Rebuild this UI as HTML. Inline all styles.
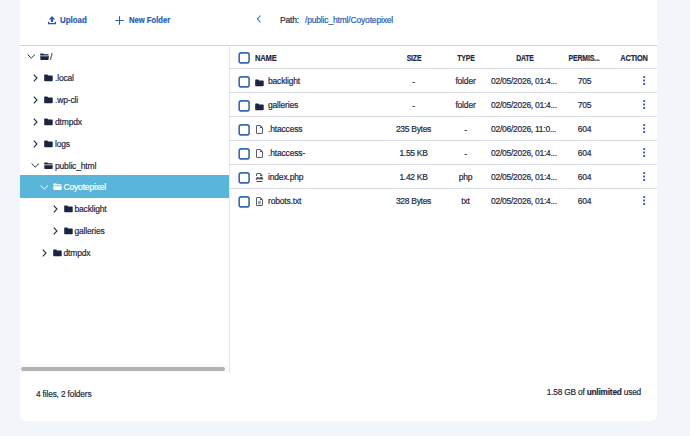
<!DOCTYPE html>
<html><head><meta charset="utf-8">
<style>
*{margin:0;padding:0;box-sizing:border-box}
html,body{width:690px;height:436px;overflow:hidden;background:#f2f5f9;font-family:"Liberation Sans",sans-serif;color:#1f2a44}
.card{position:absolute;left:20px;top:-10px;width:637px;height:431px;background:#fff;border-radius:6px}
.a{position:absolute;white-space:nowrap;line-height:10px;font-size:8.5px;letter-spacing:-0.17px;-webkit-text-stroke:0.2px currentColor}
.b{font-weight:bold}
.hd{font-size:8.6px;transform:scaleX(0.88);transform-origin:0 50%}
.hdc{font-size:8.6px;transform:scaleX(0.80);transform-origin:50% 50%}
.st{-webkit-text-stroke:0.2px currentColor}
.blue{color:#2a5db0}
.hl{position:absolute;height:1px;background:#d9dde1}
.vl{position:absolute;width:1px;background:#e6e6e7}
.cb{position:absolute;width:11.5px;height:11.5px;border:1.7px solid #3f67b0;border-radius:2.5px}
svg{position:absolute;overflow:visible}
</style></head><body>
<div class="card"></div>

<!-- toolbar -->
<svg style="left:47px;top:15px" width="10" height="10" viewBox="0 0 10 10"><path d="M5 1 L8.2 4.4 H6.1 V7 H3.9 V4.4 H1.8 Z" fill="#2456b8"/><path d="M1.6 6.8 V8.6 H8.4 V6.8" fill="none" stroke="#2456b8" stroke-width="1.3"/></svg>
<span class="a b blue" style="left:60px;top:15px;font-size:8.6px;letter-spacing:0;transform:scaleX(0.92);transform-origin:0 50%">Upload</span>
<svg style="left:115px;top:15.5px" width="9" height="9" viewBox="0 0 9 9"><path d="M4.5 0.3 V8.7 M0.3 4.5 H8.7" stroke="#2a5bb5" stroke-width="1.1"/></svg>
<span class="a b blue" style="left:128.5px;top:15px;font-size:8.6px;letter-spacing:0;transform:scaleX(0.89);transform-origin:0 50%">New Folder</span>
<svg style="left:255px;top:14px" width="8" height="10" viewBox="0 0 8 10"><path d="M5.5 1.5 L2.5 5 L5.5 8.5" fill="none" stroke="#3a68b8" stroke-width="1.1"/></svg>
<span class="a" style="left:280px;top:15px">Path:</span>
<span class="a blue" style="left:305px;top:15px">/public_html/Coyotepixel</span>

<div class="hl" style="left:20px;top:45px;width:637px;background:#d1d2d4"></div>
<div class="vl" style="left:229px;top:45px;height:328px"></div>

<!-- tree -->
<div style="position:absolute;left:20px;top:175px;width:209px;height:23px;background:#5ab5db"></div>
<svg style="left:27px;top:54.0px" width="9" height="5" viewBox="0 0 9 5"><path d="M0.6 0.5 L4.3 4.1 L8 0.5" fill="none" stroke="#1f2a44" stroke-width="1"/></svg>
<svg style="left:40px;top:52.5px" width="9" height="8" viewBox="0 0 9 8"><path d="M0.7 0.4 H3.2 L4.1 1.2 H8 Q8.6 1.2 8.6 1.8 V2.6 H0.2 V0.9 Q0.2 0.4 0.7 0.4 Z" fill="#1b2440"/><path d="M0.1 3.2 H8.9 L8.5 6.6 Q8.45 7.1 7.9 7.1 H1.1 Q0.55 7.1 0.5 6.6 Z" fill="#1b2440"/></svg>
<span class="a " style="left:50px;top:51.5px;">/</span>
<svg style="left:33px;top:74.3px" width="5" height="8" viewBox="0 0 5 8"><path d="M0.8 0.6 L4 4 L0.8 7.4" fill="none" stroke="#1f2a44" stroke-width="1.1"/></svg>
<svg style="left:44px;top:74.3px" width="9" height="8" viewBox="0 0 9 8"><path d="M0.8 0.4 H3.2 L4.2 1.4 H8 Q8.7 1.4 8.7 2.1 V6.6 Q8.7 7.3 8 7.3 H0.9 Q0.2 7.3 0.2 6.6 V1 Q0.2 0.4 0.8 0.4 Z" fill="#1b2440"/></svg>
<span class="a " style="left:55px;top:73.3px;">.local</span>
<svg style="left:33px;top:96.1px" width="5" height="8" viewBox="0 0 5 8"><path d="M0.8 0.6 L4 4 L0.8 7.4" fill="none" stroke="#1f2a44" stroke-width="1.1"/></svg>
<svg style="left:44px;top:96.1px" width="9" height="8" viewBox="0 0 9 8"><path d="M0.8 0.4 H3.2 L4.2 1.4 H8 Q8.7 1.4 8.7 2.1 V6.6 Q8.7 7.3 8 7.3 H0.9 Q0.2 7.3 0.2 6.6 V1 Q0.2 0.4 0.8 0.4 Z" fill="#1b2440"/></svg>
<span class="a " style="left:55px;top:95.1px;">.wp-cli</span>
<svg style="left:33px;top:117.9px" width="5" height="8" viewBox="0 0 5 8"><path d="M0.8 0.6 L4 4 L0.8 7.4" fill="none" stroke="#1f2a44" stroke-width="1.1"/></svg>
<svg style="left:44px;top:117.9px" width="9" height="8" viewBox="0 0 9 8"><path d="M0.8 0.4 H3.2 L4.2 1.4 H8 Q8.7 1.4 8.7 2.1 V6.6 Q8.7 7.3 8 7.3 H0.9 Q0.2 7.3 0.2 6.6 V1 Q0.2 0.4 0.8 0.4 Z" fill="#1b2440"/></svg>
<span class="a " style="left:55px;top:116.9px;">dtmpdx</span>
<svg style="left:33px;top:139.7px" width="5" height="8" viewBox="0 0 5 8"><path d="M0.8 0.6 L4 4 L0.8 7.4" fill="none" stroke="#1f2a44" stroke-width="1.1"/></svg>
<svg style="left:44px;top:139.7px" width="9" height="8" viewBox="0 0 9 8"><path d="M0.8 0.4 H3.2 L4.2 1.4 H8 Q8.7 1.4 8.7 2.1 V6.6 Q8.7 7.3 8 7.3 H0.9 Q0.2 7.3 0.2 6.6 V1 Q0.2 0.4 0.8 0.4 Z" fill="#1b2440"/></svg>
<span class="a " style="left:55px;top:138.7px;">logs</span>
<svg style="left:31px;top:163.0px" width="9" height="5" viewBox="0 0 9 5"><path d="M0.6 0.5 L4.3 4.1 L8 0.5" fill="none" stroke="#1f2a44" stroke-width="1"/></svg>
<svg style="left:44px;top:161.5px" width="9" height="8" viewBox="0 0 9 8"><path d="M0.7 0.4 H3.2 L4.1 1.2 H8 Q8.6 1.2 8.6 1.8 V2.6 H0.2 V0.9 Q0.2 0.4 0.7 0.4 Z" fill="#1b2440"/><path d="M0.1 3.2 H8.9 L8.5 6.6 Q8.45 7.1 7.9 7.1 H1.1 Q0.55 7.1 0.5 6.6 Z" fill="#1b2440"/></svg>
<span class="a " style="left:55px;top:160.5px;">public_html</span>
<svg style="left:40px;top:184.8px" width="9" height="5" viewBox="0 0 9 5"><path d="M0.6 0.5 L4.3 4.1 L8 0.5" fill="none" stroke="#fff" stroke-width="1"/></svg>
<svg style="left:53px;top:183.3px" width="9" height="8" viewBox="0 0 9 8"><path d="M0.7 0.4 H3.2 L4.1 1.2 H8 Q8.6 1.2 8.6 1.8 V2.6 H0.2 V0.9 Q0.2 0.4 0.7 0.4 Z" fill="#fff"/><path d="M0.1 3.2 H8.9 L8.5 6.6 Q8.45 7.1 7.9 7.1 H1.1 Q0.55 7.1 0.5 6.6 Z" fill="#fff"/></svg>
<span class="a " style="left:63.5px;top:182.3px;color:#fff">Coyotepixel</span>
<svg style="left:53px;top:205.1px" width="5" height="8" viewBox="0 0 5 8"><path d="M0.8 0.6 L4 4 L0.8 7.4" fill="none" stroke="#1f2a44" stroke-width="1.1"/></svg>
<svg style="left:64px;top:205.1px" width="9" height="8" viewBox="0 0 9 8"><path d="M0.8 0.4 H3.2 L4.2 1.4 H8 Q8.7 1.4 8.7 2.1 V6.6 Q8.7 7.3 8 7.3 H0.9 Q0.2 7.3 0.2 6.6 V1 Q0.2 0.4 0.8 0.4 Z" fill="#1b2440"/></svg>
<span class="a " style="left:74.5px;top:204.1px;">backlight</span>
<svg style="left:53px;top:226.9px" width="5" height="8" viewBox="0 0 5 8"><path d="M0.8 0.6 L4 4 L0.8 7.4" fill="none" stroke="#1f2a44" stroke-width="1.1"/></svg>
<svg style="left:64px;top:226.9px" width="9" height="8" viewBox="0 0 9 8"><path d="M0.8 0.4 H3.2 L4.2 1.4 H8 Q8.7 1.4 8.7 2.1 V6.6 Q8.7 7.3 8 7.3 H0.9 Q0.2 7.3 0.2 6.6 V1 Q0.2 0.4 0.8 0.4 Z" fill="#1b2440"/></svg>
<span class="a " style="left:74.5px;top:225.9px;">galleries</span>
<svg style="left:42px;top:248.7px" width="5" height="8" viewBox="0 0 5 8"><path d="M0.8 0.6 L4 4 L0.8 7.4" fill="none" stroke="#1f2a44" stroke-width="1.1"/></svg>
<svg style="left:53px;top:248.7px" width="9" height="8" viewBox="0 0 9 8"><path d="M0.8 0.4 H3.2 L4.2 1.4 H8 Q8.7 1.4 8.7 2.1 V6.6 Q8.7 7.3 8 7.3 H0.9 Q0.2 7.3 0.2 6.6 V1 Q0.2 0.4 0.8 0.4 Z" fill="#1b2440"/></svg>
<span class="a " style="left:63.5px;top:247.7px;">dtmpdx</span>

<!-- scrollbar -->
<div style="position:absolute;left:20px;top:364px;width:209px;height:9px;background:#fafafa"></div>
<div style="position:absolute;left:21px;top:367px;width:204px;height:4px;border-radius:2px;background:#b3b3b3"></div>

<!-- table -->
<svg style="left:238px;top:52px" width="12" height="12" viewBox="0 0 12 12"><rect x="1.2" y="0.9" width="9.9" height="10" rx="2" fill="none" stroke="#3d66b0" stroke-width="1.6"/></svg>
<span class="a b hd" style="left:255px;top:52.5px;">NAME</span>
<span class="a b hdc" style="left:363.5px;top:52.5px;width:100px;text-align:center;">SIZE</span>
<span class="a b hdc" style="left:415.5px;top:52.5px;width:100px;text-align:center;">TYPE</span>
<span class="a b hdc" style="left:475px;top:52.5px;width:100px;text-align:center;">DATE</span>
<span class="a b hdc" style="left:534px;top:52.5px;width:100px;text-align:center;">PERMIS...</span>
<span class="a b hdc" style="left:584.3px;top:52.5px;width:100px;text-align:center;transform:scaleX(0.86)">ACTION</span>
<svg style="left:238px;top:75.5px" width="12" height="12" viewBox="0 0 12 12"><rect x="1.2" y="0.9" width="9.9" height="10" rx="2" fill="none" stroke="#3d66b0" stroke-width="1.6"/></svg>
<svg style="left:255px;top:78.5px" width="9" height="8" viewBox="0 0 9 8"><path d="M0.8 0.4 H3.2 L4.2 1.4 H8 Q8.7 1.4 8.7 2.1 V6.6 Q8.7 7.3 8 7.3 H0.9 Q0.2 7.3 0.2 6.6 V1 Q0.2 0.4 0.8 0.4 Z" fill="#1b2440"/></svg>
<span class="a " style="left:268px;top:76.0px;">backlight</span>
<span class="a " style="left:363.5px;top:76.7px;width:100px;text-align:center;">-</span>
<span class="a " style="left:415.5px;top:76.0px;width:100px;text-align:center;">folder</span>
<span class="a " style="left:491px;top:76.0px;letter-spacing:-0.27px">02/05/2026, 01:4...</span>
<span class="a " style="left:534.5px;top:76.0px;width:100px;text-align:center;">705</span>
<svg style="left:643px;top:76.0px" width="3" height="10" viewBox="0 0 3 10"><rect x="0.2" y="0" width="1.9" height="1.9" rx="0.4" fill="#2a5bb8"/><rect x="0.2" y="3.5" width="1.9" height="1.9" rx="0.4" fill="#2a5bb8"/><rect x="0.2" y="7" width="1.9" height="1.9" rx="0.4" fill="#2a5bb8"/></svg>
<svg style="left:238px;top:99.5px" width="12" height="12" viewBox="0 0 12 12"><rect x="1.2" y="0.9" width="9.9" height="10" rx="2" fill="none" stroke="#3d66b0" stroke-width="1.6"/></svg>
<svg style="left:255px;top:102.5px" width="9" height="8" viewBox="0 0 9 8"><path d="M0.8 0.4 H3.2 L4.2 1.4 H8 Q8.7 1.4 8.7 2.1 V6.6 Q8.7 7.3 8 7.3 H0.9 Q0.2 7.3 0.2 6.6 V1 Q0.2 0.4 0.8 0.4 Z" fill="#1b2440"/></svg>
<span class="a " style="left:268px;top:100.0px;">galleries</span>
<span class="a " style="left:363.5px;top:100.7px;width:100px;text-align:center;">-</span>
<span class="a " style="left:415.5px;top:100.0px;width:100px;text-align:center;">folder</span>
<span class="a " style="left:491px;top:100.0px;letter-spacing:-0.27px">02/05/2026, 01:4...</span>
<span class="a " style="left:534.5px;top:100.0px;width:100px;text-align:center;">705</span>
<svg style="left:643px;top:100.0px" width="3" height="10" viewBox="0 0 3 10"><rect x="0.2" y="0" width="1.9" height="1.9" rx="0.4" fill="#2a5bb8"/><rect x="0.2" y="3.5" width="1.9" height="1.9" rx="0.4" fill="#2a5bb8"/><rect x="0.2" y="7" width="1.9" height="1.9" rx="0.4" fill="#2a5bb8"/></svg>
<svg style="left:238px;top:123.5px" width="12" height="12" viewBox="0 0 12 12"><rect x="1.2" y="0.9" width="9.9" height="10" rx="2" fill="none" stroke="#3d66b0" stroke-width="1.6"/></svg>
<svg style="left:256px;top:125.0px" width="8" height="10" viewBox="0 0 8 10"><path d="M1 0.5 H4.3 L6.5 2.7 V8 Q6.5 8.5 6 8.5 H1 Q0.5 8.5 0.5 8 V1 Q0.5 0.5 1 0.5 Z" fill="none" stroke="#434857" stroke-width="0.9" stroke-linejoin="round"/><path d="M4.1 0.5 L6.5 2.9 H4.5 Q4.1 2.9 4.1 2.5 Z" fill="#434857"/></svg>
<span class="a " style="left:268px;top:124.0px;">.htaccess</span>
<span class="a " style="left:363.5px;top:124.0px;width:100px;text-align:center;letter-spacing:-0.3px">235 Bytes</span>
<span class="a " style="left:415.5px;top:124.7px;width:100px;text-align:center;">-</span>
<span class="a " style="left:491px;top:124.0px;letter-spacing:-0.27px">02/06/2026, 11:0...</span>
<span class="a " style="left:534.5px;top:124.0px;width:100px;text-align:center;">604</span>
<svg style="left:643px;top:124.0px" width="3" height="10" viewBox="0 0 3 10"><rect x="0.2" y="0" width="1.9" height="1.9" rx="0.4" fill="#2a5bb8"/><rect x="0.2" y="3.5" width="1.9" height="1.9" rx="0.4" fill="#2a5bb8"/><rect x="0.2" y="7" width="1.9" height="1.9" rx="0.4" fill="#2a5bb8"/></svg>
<svg style="left:238px;top:147.5px" width="12" height="12" viewBox="0 0 12 12"><rect x="1.2" y="0.9" width="9.9" height="10" rx="2" fill="none" stroke="#3d66b0" stroke-width="1.6"/></svg>
<svg style="left:256px;top:149.0px" width="8" height="10" viewBox="0 0 8 10"><path d="M1 0.5 H4.3 L6.5 2.7 V8 Q6.5 8.5 6 8.5 H1 Q0.5 8.5 0.5 8 V1 Q0.5 0.5 1 0.5 Z" fill="none" stroke="#434857" stroke-width="0.9" stroke-linejoin="round"/><path d="M4.1 0.5 L6.5 2.9 H4.5 Q4.1 2.9 4.1 2.5 Z" fill="#434857"/></svg>
<span class="a " style="left:268px;top:148.0px;">.htaccess-</span>
<span class="a " style="left:363.5px;top:148.0px;width:100px;text-align:center;letter-spacing:-0.3px">1.55 KB</span>
<span class="a " style="left:415.5px;top:148.7px;width:100px;text-align:center;">-</span>
<span class="a " style="left:491px;top:148.0px;letter-spacing:-0.27px">02/05/2026, 01:4...</span>
<span class="a " style="left:534.5px;top:148.0px;width:100px;text-align:center;">604</span>
<svg style="left:643px;top:148.0px" width="3" height="10" viewBox="0 0 3 10"><rect x="0.2" y="0" width="1.9" height="1.9" rx="0.4" fill="#2a5bb8"/><rect x="0.2" y="3.5" width="1.9" height="1.9" rx="0.4" fill="#2a5bb8"/><rect x="0.2" y="7" width="1.9" height="1.9" rx="0.4" fill="#2a5bb8"/></svg>
<svg style="left:238px;top:171.5px" width="12" height="12" viewBox="0 0 12 12"><rect x="1.2" y="0.9" width="9.9" height="10" rx="2" fill="none" stroke="#3d66b0" stroke-width="1.6"/></svg>
<svg style="left:256px;top:173.0px" width="8" height="10" viewBox="0 0 8 10"><path d="M0.5 3 V1 Q0.5 0.5 1 0.5 H4.3 L6.5 2.7" fill="none" stroke="#434857" stroke-width="0.9" stroke-linejoin="round"/><path d="M4.1 0.5 L6.5 2.9 H4.5 Q4.1 2.9 4.1 2.5 Z" fill="#434857"/><path d="M-0.4 6.9 L0.5 4.3 Q1.1 3.6 1.8 4.2 L2.2 5 L2.8 3.9 L3.4 5.2 L4 4.2 Q4.9 3.5 5.9 4 Q7 4.6 7.2 5.6 L6.8 6.4 Q5.6 6.8 4.6 6.2 L4.2 5.8 L3.6 6.9 L2.8 5.6 L2.1 6.8 L0.9 5.8 L0.5 6.9 Z" fill="#434857"/><path d="M0.5 8.5 H6.5" stroke="#434857" stroke-width="1"/></svg>
<span class="a " style="left:268px;top:172.0px;">index.php</span>
<span class="a " style="left:363.5px;top:172.0px;width:100px;text-align:center;letter-spacing:-0.3px">1.42 KB</span>
<span class="a " style="left:415.5px;top:172.0px;width:100px;text-align:center;">php</span>
<span class="a " style="left:491px;top:172.0px;letter-spacing:-0.27px">02/05/2026, 01:4...</span>
<span class="a " style="left:534.5px;top:172.0px;width:100px;text-align:center;">604</span>
<svg style="left:643px;top:172.0px" width="3" height="10" viewBox="0 0 3 10"><rect x="0.2" y="0" width="1.9" height="1.9" rx="0.4" fill="#2a5bb8"/><rect x="0.2" y="3.5" width="1.9" height="1.9" rx="0.4" fill="#2a5bb8"/><rect x="0.2" y="7" width="1.9" height="1.9" rx="0.4" fill="#2a5bb8"/></svg>
<svg style="left:238px;top:195.5px" width="12" height="12" viewBox="0 0 12 12"><rect x="1.2" y="0.9" width="9.9" height="10" rx="2" fill="none" stroke="#3d66b0" stroke-width="1.6"/></svg>
<svg style="left:256px;top:197.0px" width="8" height="10" viewBox="0 0 8 10"><path d="M1 0.5 H4.3 L6.5 2.7 V8 Q6.5 8.5 6 8.5 H1 Q0.5 8.5 0.5 8 V1 Q0.5 0.5 1 0.5 Z" fill="none" stroke="#434857" stroke-width="0.9" stroke-linejoin="round"/><path d="M4.1 0.5 L6.5 2.9 H4.5 Q4.1 2.9 4.1 2.5 Z" fill="#434857"/><path d="M2 3.8 H5 V7.3 H2 Z" fill="#a3a5ab"/></svg>
<span class="a " style="left:268px;top:196.0px;">robots.txt</span>
<span class="a " style="left:363.5px;top:196.0px;width:100px;text-align:center;letter-spacing:-0.3px">328 Bytes</span>
<span class="a " style="left:415.5px;top:196.0px;width:100px;text-align:center;">txt</span>
<span class="a " style="left:491px;top:196.0px;letter-spacing:-0.27px">02/05/2026, 01:4...</span>
<span class="a " style="left:534.5px;top:196.0px;width:100px;text-align:center;">604</span>
<svg style="left:643px;top:196.0px" width="3" height="10" viewBox="0 0 3 10"><rect x="0.2" y="0" width="1.9" height="1.9" rx="0.4" fill="#2a5bb8"/><rect x="0.2" y="3.5" width="1.9" height="1.9" rx="0.4" fill="#2a5bb8"/><rect x="0.2" y="7" width="1.9" height="1.9" rx="0.4" fill="#2a5bb8"/></svg>
<div class="hl" style="left:230px;top:68px;width:427px"></div>
<div class="hl" style="left:230px;top:92px;width:427px"></div>
<div class="hl" style="left:230px;top:116px;width:427px"></div>
<div class="hl" style="left:230px;top:140px;width:427px"></div>
<div class="hl" style="left:230px;top:164px;width:427px"></div>
<div class="hl" style="left:230px;top:188px;width:427px"></div>

<span class="a" style="left:36px;top:389px;font-size:8.3px;letter-spacing:-0.15px">4 files, 2 folders</span>
<span class="a" style="left:441px;top:386.5px;width:200px;text-align:right;font-size:8.3px;letter-spacing:-0.2px">1.58 GB of <b>unlimited</b> used</span>
</body></html>
